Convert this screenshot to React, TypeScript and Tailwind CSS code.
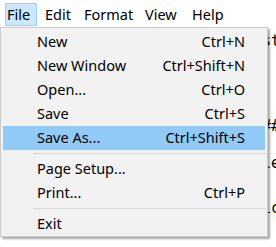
import React from 'react';

type Item = { label: string; shortcut?: string; active?: boolean } | 'sep';

const items: Item[] = [
    { label: 'New', shortcut: 'Ctrl+N' },
    { label: 'New Window', shortcut: 'Ctrl+Shift+N' },
    { label: 'Open...', shortcut: 'Ctrl+O' },
    { label: 'Save', shortcut: 'Ctrl+S' },
    { label: 'Save As...', shortcut: 'Ctrl+Shift+S', active: true },
    'sep',
    { label: 'Page Setup...' },
    { label: 'Print...', shortcut: 'Ctrl+P' },
    'sep',
    { label: 'Exit' },
];

const font = { fontFamily: '"Noto Sans", "Open Sans", sans-serif' };

export default function App() {
    return (
        <div
            className="relative w-[276px] h-[247px] overflow-hidden bg-white text-black text-[14.5px]"
            style={font}
        >
            {/* menu bar */}
            <div className="flex h-[27px] items-start">
                <div className="ml-[5px] mt-[3px] flex h-[23px] w-[32px] items-center border border-[#99d1ff] bg-[#cce8ff] pl-[1px]">
                    File
                </div>
                <div className="ml-[8px] mt-[3px] flex h-[23px] w-[39px] items-center">Edit</div>
                <div className="mt-[3px] flex h-[23px] w-[61px] items-center">Format</div>
                <div className="mt-[3px] flex h-[23px] w-[47px] items-center">View</div>
                <div className="mt-[3px] flex h-[23px] items-center">Help</div>
            </div>

            {/* document text behind the menu */}
            <div
                className="flex flex-col text-[15px] whitespace-pre"
                style={{ fontFamily: '"DejaVu Sans Mono", monospace' }}
            >
                <div className="mt-[4px] h-[20px] leading-[20px] pl-[262px]">st</div>
                <div className="mt-[65px] h-[20px] leading-[20px] pl-[262px]">##</div>
                <div className="mt-[17px] h-[20px] leading-[20px] pl-[262px]">le</div>
                <div className="mt-[25px] h-[20px] leading-[20px] pl-[262px]">ic</div>
            </div>

            {/* file menu popup */}
            <div className="absolute left-0 top-[27px] w-[268px] border border-[#cccccc] bg-[#f2f2f2] pt-[2px] shadow-[2px_2px_2px_rgba(0,0,0,0.35)]">
                {items.map((it, i) =>
                    it === 'sep' ? (
                        <div key={i} className="h-[7px] pt-[3px] pl-[32px] pr-[1px]">
                            <div className="h-[1px] bg-[#d7d7d7]" />
                        </div>
                    ) : (
                        <div
                            key={i}
                            className={
                                'mx-[2px] flex h-[24px] items-center justify-between pl-[34px] pr-[20px] ' +
                                (it.active ? 'bg-[#91c9f7]' : '')
                            }
                        >
                            <span>{it.label}</span>
                            <span>{it.shortcut}</span>
                        </div>
                    )
                )}
            </div>
        </div>
    );
}
